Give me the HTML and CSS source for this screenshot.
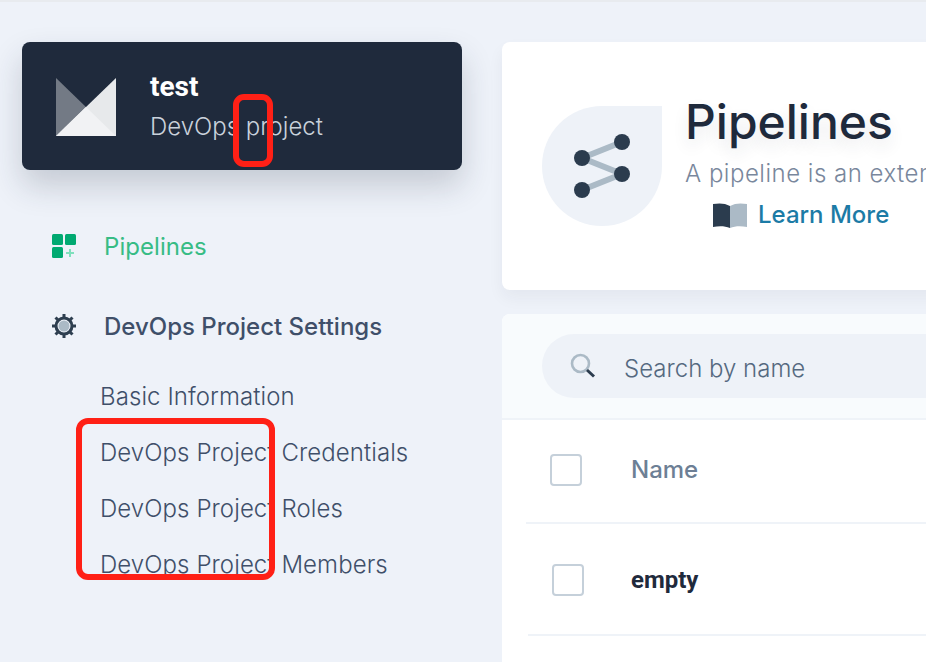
FILE: index.html
```html
<!DOCTYPE html>
<html lang="en">
<head>
<meta charset="utf-8">
<title>Pipelines</title>
<link rel="stylesheet" href="styles.css">
</head>
<body>
<div class="page">
  <aside class="sidebar">
    <div class="project-card">
      <svg class="project-logo" width="60" height="58" viewBox="0 0 60 58">
        <path d="M0 0 31 30 0 58Z" fill="#737a85"/>
        <path d="M60 0V58H0Z" fill="#e7e9eb"/>
        <path d="M0 58 30 29 60 58Z" fill="#f1f2f4"/>
      </svg>
      <div class="project-text">
        <div class="project-name">test</div>
        <div class="project-type">DevOps project</div>
      </div>
    </div>
    <nav class="nav">
      <div class="nav-item nav-item-active">
        <svg class="nav-icon" width="24" height="24" viewBox="0 0 24 24">
          <rect width="11" height="11" rx="1.5" fill="#00a971"/>
          <rect x="13" width="11" height="11" rx="1.5" fill="#00a971"/>
          <rect y="13" width="11" height="11" rx="1.5" fill="#00a971"/>
          <path d="M18 15v8M14 19h8" stroke="#7fe0bd" stroke-width="2"/>
        </svg>
        <span>Pipelines</span>
      </div>
      <div class="nav-item">
        <svg class="nav-icon" width="24" height="24" viewBox="0 0 24 24">
          <circle cx="12" cy="12" r="8" fill="none" stroke="#2e3f50" stroke-width="3"/>
          <circle cx="12" cy="12" r="5.5" fill="#abbac6"/>
          <path d="M12 0v4M12 20v4M0 12h4M20 12h4M3.5 3.5l2.8 2.8M17.7 17.7l2.8 2.8M3.5 20.5l2.8-2.8M17.7 6.3l2.8-2.8" stroke="#2e3f50" stroke-width="3"/>
        </svg>
        <span>DevOps Project Settings</span>
      </div>
      <ul class="subnav">
        <li>Basic Information</li>
        <li>DevOps Project Credentials</li>
        <li>DevOps Project Roles</li>
        <li>DevOps Project Members</li>
      </ul>
    </nav>
  </aside>
  <main class="main">
    <section class="hero">
      <div class="hero-icon">
        <svg width="64" height="64" viewBox="0 0 64 64">
          <path d="M48 12 8 28 48 44 8 60" transform="translate(0 -4)" fill="none" stroke="#abbac6" stroke-width="6"/>
          <circle cx="8" cy="24" r="8" fill="#2b3c4e"/>
          <circle cx="48" cy="8" r="8" fill="#2b3c4e"/>
          <circle cx="48" cy="40" r="8" fill="#2b3c4e"/>
          <circle cx="8" cy="56" r="8" fill="#2b3c4e"/>
        </svg>
      </div>
      <div class="hero-text">
        <h1 class="hero-title">Pipelines</h1>
        <p class="hero-desc">A pipeline is an extensible set of automated processes for continuous delivery</p>
        <a class="learn-more">
          <svg width="34" height="25" viewBox="0 0 34 25">
            <path d="M0 1C6 0 12 0 17 3V25C12 23 6 23 0 24Z" fill="#2b3c4e"/>
            <path d="M34 1C28 0 22 0 17 3V25C22 23 28 23 34 24Z" fill="#abbac6"/>
          </svg>
          <span>Learn More</span>
        </a>
      </div>
    </section>
    <section class="list">
      <div class="toolbar">
        <div class="search">
          <svg width="26" height="26" viewBox="0 0 26 26">
            <circle cx="10.5" cy="10.5" r="8.5" fill="none" stroke="#abbac6" stroke-width="2.6"/>
            <path d="M17 17l7 6.5" stroke="#2b3c4e" stroke-width="3"/>
          </svg>
          <span class="search-label">Search by name</span>
        </div>
      </div>
      <div class="row row-head">
        <span class="checkbox"></span>
        <span class="col-name">Name</span>
      </div>
      <div class="row row-body">
        <span class="checkbox"></span>
        <span class="col-name">empty</span>
      </div>
    </section>
  </main>
  <div class="mark mark-small"></div>
  <div class="mark mark-large"></div>
</div>
</body>
</html>
```

FILE: styles.css
```css
* { box-sizing: border-box; }
html, body { margin: 0; padding: 0; }
body {
  background: #eef2f9;
  font-family: "Inter", "Noto Sans", sans-serif;
  overflow: hidden;
}
.page {
  position: relative;
  display: flex;
  width: 926px;
  height: 662px;
  overflow: hidden;
  padding-top: 42px;
  border-top: 2px solid #e8ebef;
}
.sidebar { width: 502px; flex: none; padding-left: 22px; margin-top: -2px; }
.project-card {
  display: flex;
  align-items: center;
  width: 440px;
  height: 128px;
  padding-left: 34px;
  gap: 34px;
  background: #1f2a3c;
  border-radius: 8px;
  box-shadow: 0 16px 32px rgba(35, 45, 65, 0.2);
}
.project-logo { flex: none; margin-top: 2px; }
.project-text { padding-top: 4px; }
.project-name { font: 700 28px/32px "Roboto", sans-serif; color: #fff; }
.project-type { font-size: 24px; font-weight: 300; line-height: 36px; margin-top: 6px; color: #c9d1db; }
.nav { padding-top: 48px; }
.nav-item {
  display: flex;
  align-items: center;
  gap: 28px;
  height: 56px;
  margin-bottom: 24px;
  padding-left: 30px;
  font-size: 24px;
  font-weight: 500;
  color: #3f4f69;
}
.nav-item-active { color: #37bc85; font-weight: 400; letter-spacing: 0.05px; }
.nav-icon { flex: none; }
.subnav { list-style: none; margin: -10px 0 0; padding: 0 0 0 78px; }
.subnav li { height: 56px; line-height: 57px; font-size: 24px; font-weight: 300; letter-spacing: 0.08px; color: #3f4f69; white-space: nowrap; }
.main { flex: none; display: flex; flex-direction: column; width: 600px; margin-top: -2px; }
.hero {
  flex: none;
  display: flex;
  height: 248px;
  padding: 64px 0 0 40px;
  background: #fff;
  border-radius: 8px 0 0 8px;
  box-shadow: 0 8px 16px rgba(35, 45, 65, 0.05);
}
.hero-icon {
  flex: none;
  display: flex;
  align-items: center;
  justify-content: center;
  width: 120px;
  height: 120px;
  padding: 0 0 0 8px;
  background: #eef2f8;
  border-radius: 50% 0 50% 50%;
}
.hero-text { margin-left: 23px; margin-top: -12px; }
.hero-title {
  margin: 0;
  font-size: 48px;
  font-weight: 500;
  line-height: 56px;
  color: #1f2a3c;
  text-shadow: 0 8px 16px rgba(35, 45, 65, 0.1);
}
.hero-desc { margin: 8px 0 0; font-size: 24px; font-weight: 300; line-height: 32px; letter-spacing: 0.5px; color: #79879c; white-space: nowrap; }
.learn-more {
  display: flex;
  align-items: center;
  gap: 11px;
  margin: 9px 0 0 28px;
  font-size: 24px;
  font-weight: 500;
  line-height: 32px;
  color: #1c7ba6;
}
.list { flex: 1; margin-top: 24px; background: #fff; border-radius: 8px 0 0 0; }
.toolbar {
  height: 106px;
  padding: 20px 0 0 40px;
  background: #f8fbfd;
  border-bottom: 2px solid #eff3f8;
  border-radius: 8px 0 0 0;
}
.search {
  display: flex;
  align-items: center;
  gap: 28px;
  height: 64px;
  padding-left: 28px;
  background: #eef2f8;
  border-radius: 32px 0 0 32px;
  font-size: 24px;
  font-weight: 300;
  color: #556980;
}
.search-label { padding-top: 4px; }
.row { display: flex; align-items: center; border-bottom: 2px solid #eff3f8; }
.row-head { height: 104px; margin-left: 24px; padding: 0 0 2px 24px; }
.row-body { height: 112px; margin-left: 26px; padding: 2px 0 0 24px; }
.checkbox {
  flex: none;
  width: 32px;
  height: 32px;
  background: #fff;
  border: 2px solid #c5d0da;
  border-radius: 4px;
}
.col-name { font-size: 24px; }
.row-head .col-name { margin: 0 0 2px 49px; font-weight: 500; color: #6d7f95; }
.row-body .col-name { margin-left: 47px; font: 700 24px/32px "Roboto", sans-serif; color: #1f2a3c; }
.mark { position: absolute; border: 6px solid #ff2016; }
.mark-small { left: 233px; top: 92px; width: 40px; height: 73px; border-radius: 11px; }
.mark-large { left: 76px; top: 416px; width: 199px; height: 162px; border-radius: 12px; }
```
